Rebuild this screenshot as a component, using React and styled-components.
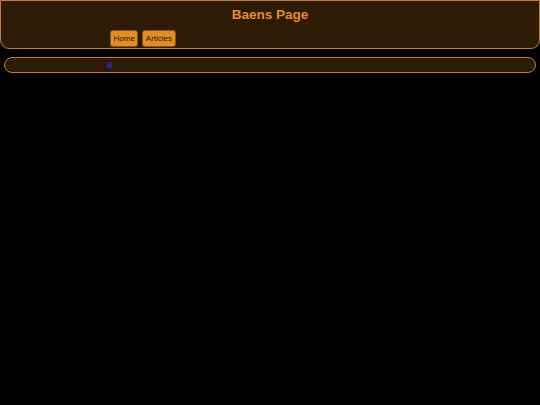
import React from 'react';
import styled, { createGlobalStyle } from 'styled-components';

const GlobalStyle = createGlobalStyle`
  html, body {
    margin: 0;
    padding: 0;
    background: #000;
    font-family: "Liberation Sans", Arial, sans-serif;
  }
`;

const Page = styled.div`
  width: 540px;
  min-height: 405px;
  background: #000;
  display: flex;
  flex-direction: column;
  gap: 8px;
`;

const Header = styled.header`
  box-sizing: border-box;
  height: 49px;
  background: #2e1b05;
  border: 1px solid #c47c28;
  border-radius: 0 0 9px 9px;
  display: flex;
  flex-direction: column;
  align-items: center;
`;

const Title = styled.h1`
  margin: 6px 0 0;
  color: #e38d22;
  font-size: 13.5px;
  font-weight: 700;
  line-height: 16px;
`;

const Nav = styled.nav`
  align-self: stretch;
  display: flex;
  gap: 4px;
  padding-left: 109px;
  margin-top: 7px;
`;

const NavButton = styled.button`
  box-sizing: border-box;
  height: 17px;
  padding: 0 2.5px;
  background: #e38d22;
  border: 1px solid #8a5510;
  border-radius: 3px;
  color: #2a1805;
  font-family: "Liberation Sans", Arial, sans-serif;
  font-size: 8px;
  line-height: 15px;
`;

const Bar = styled.div`
  box-sizing: border-box;
  margin: 0 4px;
  height: 16px;
  background: #2e1b05;
  border: 1px solid #c47c28;
  border-radius: 8px;
  display: flex;
  align-items: center;
  padding-left: 102px;
`;

const Mark = styled.span`
  color: #2828c8;
  font-size: 10px;
  font-weight: 700;
  line-height: 10px;
`;

export default function App() {
  return (
    <>
      <GlobalStyle />
      <Page>
        <Header>
          <Title>Baens Page</Title>
          <Nav>
            <NavButton>Home</NavButton>
            <NavButton>Articles</NavButton>
          </Nav>
        </Header>
        <Bar>
          <Mark>a</Mark>
        </Bar>
      </Page>
    </>
  );
}
